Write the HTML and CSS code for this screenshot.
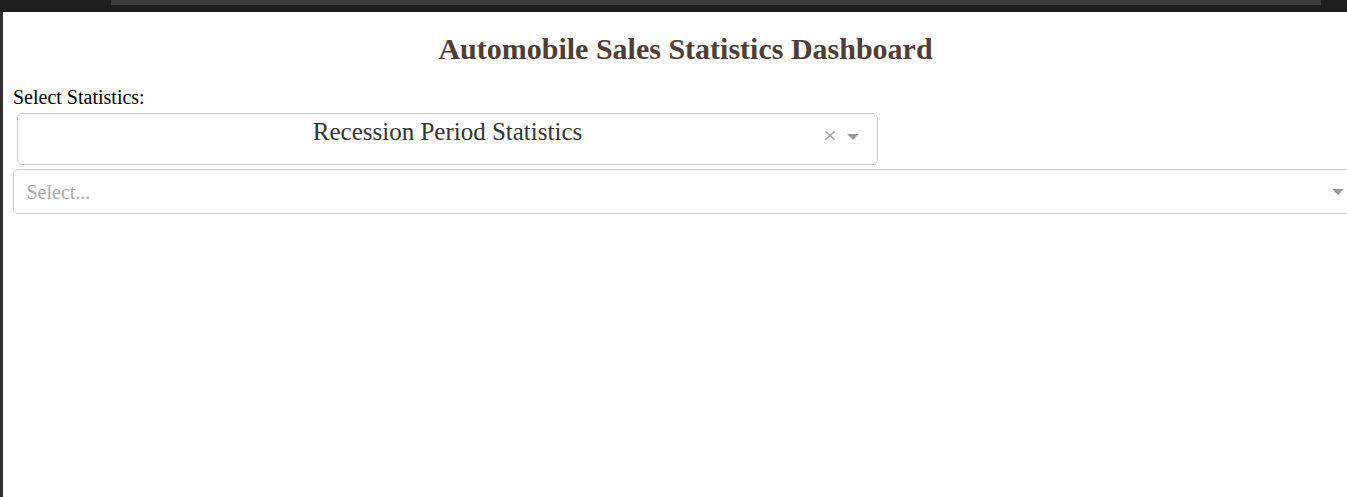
FILE: index.html
```html
<!DOCTYPE html>
<html lang="en">
<head>
<meta charset="utf-8">
<title>Automobile Sales Statistics Dashboard</title>
<link rel="stylesheet" href="styles.css">
</head>
<body>
<div class="window">
  <div class="topbar"><div class="tabstrip"></div></div>
  <div class="frame">
    <div class="gutter"></div>
    <main class="page">
      <h1 class="title">Automobile Sales Statistics Dashboard</h1>
      <label class="field-label">Select Statistics:</label>
      <div class="dropdown-wrap">
        <div class="select select--filled">
          <span class="spacer"></span>
          <span class="value">Recession Period Statistics</span>
          <span class="indicators">
            <svg class="clear" width="10" height="9" viewBox="0 0 10 9"><path d="M0.5 0.5 L9.5 8.5 M9.5 0.5 L0.5 8.5" stroke="#999" stroke-width="1.2" fill="none"/></svg>
            <svg class="arrow" width="12" height="6" viewBox="0 0 12 6"><polygon points="0,0 12,0 6,6" fill="#999"/></svg>
          </span>
        </div>
      </div>
      <div class="select select--empty">
        <span class="placeholder">Select...</span>
        <svg class="arrow2" width="12" height="6" viewBox="0 0 12 6"><polygon points="0,0 12,0 6,6" fill="#999"/></svg>
      </div>
    </main>
  </div>
</div>
</body>
</html>
```
FILE: styles.css
```css
html, body {
  margin: 0;
  height: 100%;
  overflow: hidden;
  background: #fff;
}
.window {
  width: 1368px;
  height: 497px;
  display: flex;
  flex-direction: column;
  background: #1e1e1e;
}
.topbar {
  flex: none;
  height: 12px;
  padding-left: 111px;
  background: #1e1e1e;
}
.tabstrip {
  width: 1210px;
  height: 5px;
  background: #3c3c3c;
}
.frame {
  flex: 1;
  display: flex;
}
.gutter {
  flex: none;
  width: 3px;
  background: #303030;
}
.page {
  flex: 1;
  background: #fff;
  padding: 20px 10px 0;
  font-family: "Liberation Serif", "Times New Roman", serif;
  color: #000;
}
.title {
  margin: 0 0 21px;
  font-size: 30px;
  line-height: 33px;
  font-weight: bold;
  color: #503D36;
  text-align: center;
}
.field-label {
  display: block;
  font-size: 20px;
  line-height: 23px;
}
.dropdown-wrap {
  margin-top: 0;
  padding: 4px;
  width: 861px;
}
.select {
  box-sizing: border-box;
  border: 1px solid #ccc;
  border-radius: 5px;
  background: #fff;
}
.select--filled {
  height: 52px;
  display: grid;
  grid-template-columns: 60px 1fr 60px;
}
.value {
  font-size: 25px;
  line-height: 34px;
  padding-top: 0.5px;
  color: #333;
  text-align: center;
  white-space: nowrap;
}
.indicators {
  display: flex;
  align-items: flex-start;
  padding-top: 17px;
  padding-left: 8px;
}
.clear {
  display: block;
  margin-right: 12px;
}
.arrow {
  display: block;
  margin-top: 3px;
}
.select--empty {
  height: 45px;
  display: flex;
  align-items: center;
  justify-content: space-between;
  padding: 0 13px 0 12.5px;
}
.placeholder {
  font-size: 20px;
  line-height: 22px;
  color: #aaa;
}
.arrow2 {
  display: block;
}
```
